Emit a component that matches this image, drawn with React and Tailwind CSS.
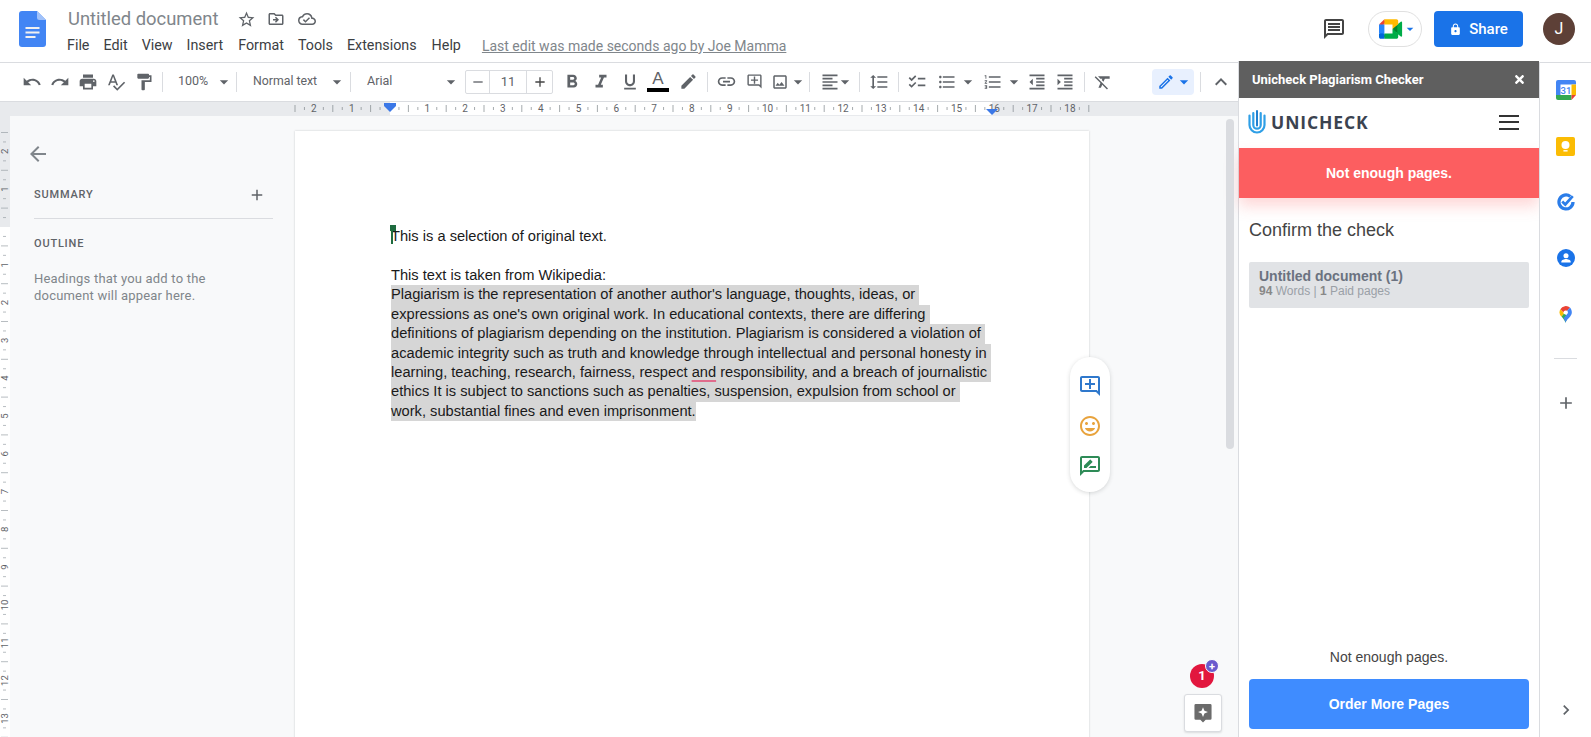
import {
  MdUndo, MdRedo, MdPrint, MdSpellcheck, MdFormatPaint, MdArrowDropDown, MdRemove, MdAdd,
  MdFormatBold, MdFormatItalic, MdFormatUnderlined, MdLink, MdOutlineAddComment, MdOutlineImage,
  MdFormatAlignLeft, MdFormatLineSpacing, MdChecklist, MdFormatListBulleted, MdFormatListNumbered,
  MdFormatIndentDecrease, MdFormatIndentIncrease, MdFormatClear, MdEdit, MdOutlineEdit, MdExpandLess, MdStarBorder,
  MdOutlineDriveFileMove, MdOutlineCloudDone, MdOutlineMessage, MdLock, MdArrowBack,
  MdOutlineInsertEmoticon, MdOutlineRateReview, MdChevronRight,
} from "react-icons/md";
import { FaTimes } from "react-icons/fa";

const menus = [
  ["File", "ml-0"],
  ["Edit", "ml-[14px]"],
  ["View", "ml-[14px]"],
  ["Insert", "ml-[14px]"],
  ["Format", "ml-[15px]"],
  ["Tools", "ml-[14px]"],
  ["Extensions", "ml-[14px]"],
  ["Help", "ml-[15px]"],
];

const selected = [
  "Plagiarism is the representation of another author's language, thoughts, ideas, or ",
  "expressions as one's own original work. In educational contexts, there are differing ",
  "definitions of plagiarism depending on the institution. Plagiarism is considered a violation of ",
  "academic integrity such as truth and knowledge through intellectual and personal honesty in ",
];

const hOrigin = 389.5;
const hNums = [-2, -1, 1, 2, 3, 4, 5, 6, 7, 8, 9, 10, 11, 12, 13, 14, 15, 16, 17, 18];
const vOrigin = 226;
const vNums = [-2, -1, 1, 2, 3, 4, 5, 6, 7, 8, 9, 10, 11, 12, 13];
const cm = 37.8;

function range(a, b) {
  const out = [];
  for (let i = a; i <= b; i += 0.25) out.push(i);
  return out;
}

function HorizontalRuler() {
  return (
    <svg width="1238" height="14" className="block shrink-0 bg-[#e8eaed]">
      <rect x="390" y="0" width="602" height="13" fill="#fff" />
      {range(-2.5, 18.5).map((n) => {
        if (Number.isInteger(n)) return null;
        const x = hOrigin + n * cm;
        const long = Number.isInteger(n * 2);
        return <line key={n} x1={x} x2={x} y1={long ? 3 : 5} y2={long ? 10 : 8} stroke="#80868b" strokeWidth="0.7" />;
      })}
      {hNums.map((n) => (
        <text key={n} x={hOrigin + n * cm} y="10" textAnchor="middle" fontSize="10" fontFamily="Roboto, sans-serif" fill="#5f6368">
          {Math.abs(n)}
        </text>
      ))}
      <path d="M384 1h12v3l-6 6-6-6z" fill="#3b78e7" />
      <path d="M986 7h12l-6 6z" fill="#3b78e7" />
    </svg>
  );
}

function VerticalRuler() {
  return (
    <svg width="10" height="622" className="block shrink-0 bg-white">
      <rect x="0" y="0" width="10" height="111" fill="#e8eaed" />
      {range(-2.5, 13.5).map((n) => {
        if (Number.isInteger(n)) return null;
        const y = vOrigin - 115 + n * cm;
        const long = Number.isInteger(n * 2);
        return <line key={n} x1={long ? 1 : 3} x2={long ? 8 : 6} y1={y} y2={y} stroke="#9aa0a6" strokeWidth="0.7" />;
      })}
      {vNums.map((n) => {
        const y = vOrigin - 115 + n * cm;
        return (
          <text key={n} x="4.5" y={y} textAnchor="middle" dominantBaseline="central" fontSize="9.5" fontFamily="Roboto, sans-serif" fill="#5f6368" transform={`rotate(-90 4.5 ${y})`}>
            {Math.abs(n)}
          </text>
        );
      })}
    </svg>
  );
}

function DocsLogo() {
  return (
    <svg width="27" height="36" viewBox="0 0 27 36" className="shrink-0">
      <path d="M3 0h15l9 9v24a3 3 0 0 1-3 3H3a3 3 0 0 1-3-3V3a3 3 0 0 1 3-3z" fill="#4285f4" />
      <path d="M18 0l9 9h-6.5A2.5 2.5 0 0 1 18 6.500z" fill="#a1c2fa" />
      <path d="M6.500 16h14v2h-14zM6.500 20.500h14v2h-14zM6.500 25h10v2h-10z" fill="#f1f1f1" />
    </svg>
  );
}

function MeetLogo() {
  return (
    <svg width="24" height="20" viewBox="0 0 24 20">
      <path d="M13.500 10l2.400 2.700 3.200 2.100.6-4.800-.6-4.700-3.300 1.800z" fill="#00832d" />
      <path d="M0 14.400V18c0 1 .8 1.800 1.800 1.800h3.600l.8-2.700-.8-2.700-2.500-.8z" fill="#0066da" />
      <path d="M5.400.200 0 5.500l2.800.8 2.600-.8.800-2.500z" fill="#e94235" />
      <path d="M5.400 5.500H0v8.900h5.400z" fill="#2684fc" />
      <path d="M21.800 2.700l-3.500 2.800v9.300l3.500 2.800c.5.400 1.300 0 1.300-.7V3.400c0-.7-.8-1.100-1.300-.7z" fill="#00ac47" />
      <path d="M13.500 10v4.400H5.400v5.400h12c1 0 1.800-.8 1.800-1.800v-3.600z" fill="#00ac47" />
      <path d="M17.400.200h-12v5.300h8.100V10l5.700-4.700V2c0-1-.8-1.800-1.800-1.800z" fill="#ffba00" />
    </svg>
  );
}

function UnicheckMark() {
  return (
    <svg width="18" height="24" viewBox="0 0 18 24" fill="none" strokeLinecap="round">
      <path d="M1.500 5.500v9.500a7.500 7.500 0 0 0 15 0V5.500" stroke="#2f9fe6" strokeWidth="2.200" />
      <path d="M5.300 3v12a3.700 3.700 0 0 0 7.400 0V3" stroke="#2f9fe6" strokeWidth="2.200" />
      <path d="M9 1v14.500" stroke="#1f7fd0" strokeWidth="2" />
    </svg>
  );
}

function CalendarIcon() {
  return (
    <svg width="20" height="20" viewBox="0 0 20 20">
      <rect x="4" y="4" width="12" height="12" fill="#fff" />
      <path d="M15 0H2a2 2 0 0 0-2 2v13h4.500V4.500H20V2a2 2 0 0 0-2-2z" fill="#4285f4" />
      <path d="M15.500 4.500H20v10.500h-4.500z" fill="#fbbc04" />
      <path d="M0 15v3a2 2 0 0 0 2 2h13.500v-5z" fill="#34a853" />
      <path d="M15.500 15H20l-4.500 5z" fill="#ea4335" />
      <text x="10" y="13.500" textAnchor="middle" fontSize="9.500" fontWeight="500" fontFamily="Roboto, sans-serif" fill="#4285f4">31</text>
    </svg>
  );
}

function KeepIcon() {
  return (
    <svg width="19" height="19" viewBox="0 0 20 20">
      <rect width="20" height="20" rx="2" fill="#fbbc04" />
      <circle cx="10" cy="8.500" r="4.200" fill="#fff" />
      <rect x="7.800" y="13.800" width="4.400" height="1.500" fill="#fff" />
    </svg>
  );
}

function TasksIcon() {
  return (
    <svg width="18" height="18" viewBox="0 0 20 20" fill="none">
      <path d="M14.800 3.800A7.800 7.800 0 1 0 17.800 10" stroke="#2b7de9" strokeWidth="3.600" />
      <path d="M5.800 9.500l3.400 3.300 8.300-9.300" stroke="#2b7de9" strokeWidth="3" />
    </svg>
  );
}

function ContactsIcon() {
  return (
    <svg width="18" height="18" viewBox="0 0 20 20">
      <circle cx="10" cy="10" r="10" fill="#1a73e8" />
      <circle cx="10" cy="7.500" r="2.800" fill="#fff" />
      <path d="M4.800 14.200c0-2 3.400-3 5.200-3s5.200 1 5.200 3v.8H4.800z" fill="#fff" />
    </svg>
  );
}

function MapsIcon() {
  return (
    <svg width="13" height="17" viewBox="0 0 16 20">
      <path d="M3 12.500c1.800 2.300 3.800 4.300 5 7.500l3-7-4.500-5z" fill="#34a853" />
      <path d="M1.700 3.500A7.500 7.500 0 0 0 3 12.500L6.500 8z" fill="#fbbc04" />
      <path d="M1.700 3.500L6.500 8a2.500 2.500 0 0 1 3.500-2.500l3.500-4A7.800 7.800 0 0 0 1.700 3.500z" fill="#ea4335" />
      <path d="M13.500 1.500L10 5.500a2.500 2.500 0 0 1 .5 3.200L5.500 14.500c1.300 1.600 2 3 2.500 5.500 1-4 7.800-7.500 7.800-12.500 0-2.300-.9-4.500-2.300-6z" fill="#4285f4" />
      <circle cx="8" cy="7.500" r="2.500" fill="#fff" />
    </svg>
  );
}

function ToolIcon({ icon: Icon, size = 20 }) {
  return (
    <div className="w-[28px] h-[28px] flex items-center justify-center shrink-0 text-[#5f6368]">
      <Icon size={size} />
    </div>
  );
}

function Caret({ className = "" }) {
  return <MdArrowDropDown size={20} className={`shrink-0 text-[#5f6368] ${className}`} />;
}

function Sep({ className = "" }) {
  return <div className={`w-px h-[20px] bg-[#dadce0] shrink-0 ${className}`} />;
}

function Toolbar() {
  return (
    <div className="h-[40px] shrink-0 border-y border-[#dadce0] bg-white flex items-center pl-[18px] pb-[1px] text-[13px] text-[#5f6368] font-['Roboto',sans-serif]">
      <ToolIcon icon={MdUndo} />
      <ToolIcon icon={MdRedo} />
      <ToolIcon icon={MdPrint} />
      <ToolIcon icon={MdSpellcheck} />
      <ToolIcon icon={MdFormatPaint} />
      <Sep className="ml-[4px]" />
      <div className="w-[73px] flex items-center pl-[15px] text-[12.500px]">
        <span className="w-[36px]">100%</span>
        <Caret />
      </div>
      <Sep />
      <div className="w-[113px] flex items-center pl-[16px] text-[12.300px]">
        <span className="w-[74px]">Normal text</span>
        <Caret />
      </div>
      <Sep />
      <div className="w-[114px] flex items-center pl-[16px] text-[12.500px]">
        <span className="w-[74px]">Arial</span>
        <Caret />
      </div>
      <div className="w-[88px] h-[24px] border border-[#dadce0] rounded-[2px] flex items-center">
        <div className="w-[24px] h-full flex items-center justify-center border-r border-[#dadce0]">
          <MdRemove size={16} />
        </div>
        <div className="w-[37px] h-full flex items-center justify-center border-r border-[#dadce0] text-[13px]">11</div>
        <div className="flex-1 h-full flex items-center justify-center">
          <MdAdd size={16} className="text-[#444]" />
        </div>
      </div>
      <div className="w-[28px] h-[28px] flex items-center justify-center ml-[5px]">
        <MdFormatBold size={22} />
      </div>
      <div className="ml-[1px]">
        <ToolIcon icon={MdFormatItalic} size={22} />
      </div>
      <div className="ml-[1px]">
        <ToolIcon icon={MdFormatUnderlined} />
      </div>
      <div className="w-[28px] h-[28px] flex flex-col items-center pt-[1px] shrink-0">
        <span className="text-[17px] leading-[19px] text-[#5f6368] font-['Liberation_Sans',sans-serif]">A</span>
        <div className="w-[22px] h-[4px] bg-black" />
      </div>
      <div className="ml-[2px]">
        <ToolIcon icon={MdEdit} size={19} />
      </div>
      <Sep className="ml-[5px]" />
      <div className="ml-[4px]">
        <ToolIcon icon={MdLink} size={21} />
      </div>
      <ToolIcon icon={MdOutlineAddComment} size={17} />
      <div className="flex items-center w-[38px] pl-[3px] shrink-0">
        <MdOutlineImage size={18} className="shrink-0" />
        <Caret className="-ml-[1px]" />
      </div>
      <Sep className="ml-[3px]" />
      <div className="flex items-center w-[46px] pl-[10px] shrink-0">
        <MdFormatAlignLeft size={20} className="shrink-0" />
        <Caret className="-ml-[5px]" />
      </div>
      <Sep className="ml-[3px]" />
      <div className="ml-[5px]">
        <ToolIcon icon={MdFormatLineSpacing} />
      </div>
      <Sep className="ml-[5px]" />
      <div className="ml-[4px]">
        <ToolIcon icon={MdChecklist} />
      </div>
      <div className="ml-[2px]">
        <ToolIcon icon={MdFormatListBulleted} />
      </div>
      <Caret className="-ml-[3px]" />
      <div className="ml-[1px]">
        <ToolIcon icon={MdFormatListNumbered} />
      </div>
      <Caret className="-ml-[3px]" />
      <div className="-ml-[1px]">
        <ToolIcon icon={MdFormatIndentDecrease} />
      </div>
      <ToolIcon icon={MdFormatIndentIncrease} />
      <Sep className="ml-[5px]" />
      <div className="ml-[4px]">
        <ToolIcon icon={MdFormatClear} />
      </div>
      <div className="ml-[35px] w-[42px] h-[26px] rounded-[4px] bg-[#e8f0fe] flex items-center pl-[5px] shrink-0">
        <MdOutlineEdit size={18} className="text-[#1a73e8] shrink-0" />
        <MdArrowDropDown size={20} className="shrink-0 text-[#1a73e8] -ml-[1px]" />
      </div>
      <Sep className="ml-[6px]" />
      <div className="ml-[6px]">
        <ToolIcon icon={MdExpandLess} size={24} />
      </div>
    </div>
  );
}

function Header() {
  return (
    <div className="h-[62px] shrink-0 flex bg-white pl-[19px] pr-[16px] font-['Roboto',sans-serif]">
      <div className="pt-[11px]">
        <DocsLogo />
      </div>
      <div className="ml-[21px] pt-[7px]">
        <div className="flex items-center h-[24px]">
          <span className="text-[18.400px] leading-[24px] text-[#80868b] ml-[1px]">Untitled document</span>
          <div className="flex items-center text-[#5f6368] ml-[19px] gap-[11px]">
            <MdStarBorder size={19} />
            <MdOutlineDriveFileMove size={18} />
            <MdOutlineCloudDone size={18} className="ml-[2px]" />
          </div>
        </div>
        <div className="flex items-center h-[20px] mt-[5px] text-[14.300px] text-[#3c4043]">
          {menus.map(([name, cls]) => (
            <span key={name} className={cls}>{name}</span>
          ))}
          <span className="ml-[21px] text-[14px] text-[#80868b] underline">Last edit was made seconds ago by Joe Mamma</span>
        </div>
      </div>
      <div className="ml-auto flex items-start pt-[11px]">
        <MdOutlineMessage size={24} className="text-[#444] mt-[6px]" />
        <div className="ml-[22px] w-[54px] h-[36px] rounded-full border border-[#e0e0e0] flex items-center pl-[10px]">
          <MeetLogo />
          <MdArrowDropDown size={16} className="text-[#1a73e8] -ml-[1px]" />
        </div>
        <div className="ml-[12px] w-[89px] h-[36px] rounded-[4px] bg-[#1a73e8] text-white flex items-center justify-center gap-[7px] text-[15px] font-medium">
          <MdLock size={13} />
          Share
        </div>
        <div className="ml-[20px] mt-[2px] w-[32px] h-[32px] rounded-full bg-[#5d4037] text-white flex items-center justify-center text-[16px]">J</div>
      </div>
    </div>
  );
}

function OutlineSidebar() {
  return (
    <div className="w-[285px] shrink-0 pl-[24px] pr-[22px] font-['Roboto',sans-serif]">
      <div className="pt-[26px] h-[70px]">
        <MdArrowBack size={24} className="text-[#80868b] -ml-[8px]" />
      </div>
      <div className="flex items-center justify-between h-[18px]">
        <span className="text-[11px] font-medium tracking-[0.8px] text-[#5f6368]">SUMMARY</span>
        <MdAdd size={18} className="text-[#5f6368] mr-[7px]" />
      </div>
      <div className="h-px bg-[#dadce0] mt-[14px]" />
      <div className="text-[11px] leading-[18px] font-medium tracking-[0.8px] text-[#5f6368] mt-[16px]">OUTLINE</div>
      <div className="text-[13px] leading-[17px] tracking-[0.2px] text-[#80868b] mt-[17px]">
        Headings that you add to the
        <br />
        document will appear here.
      </div>
    </div>
  );
}

function Page() {
  return (
    <div className="w-[794px] h-[640px] mt-[15px] shrink-0 bg-white shadow-[0_0_2px_rgba(60,64,67,0.25)] pt-[96px] pl-[96px] text-[14.670px] leading-[19.450px] text-[#1a1a1a] font-['Liberation_Sans',sans-serif]">
      <div className="relative">
        This is a selection of original text.
        <div className="absolute left-0 -top-[2px] w-[2px] h-[19px] bg-[#1e6b3f]" />
        <div className="absolute -left-[1px] -top-[2px] w-[6px] h-[6px] bg-[#1e6b3f]" />
      </div>
      <div className="h-[19.300px]" />
      <div>This text is taken from Wikipedia:</div>
      {selected.map((line) => (
        <div key={line} className="w-fit bg-[#d6d6d6] whitespace-pre">{line}</div>
      ))}
      <div className="w-fit bg-[#d6d6d6] whitespace-pre">
        {"learning, teaching, research, fairness, respect "}
        <span className="underline decoration-[#e06c8c] decoration-2 underline-offset-[3px]">and</span>
        {" responsibility, and a breach of journalistic "}
      </div>
      <div className="w-fit bg-[#d6d6d6] whitespace-pre">ethics It is subject to sanctions such as penalties, suspension, expulsion from school or </div>
      <div className="w-fit bg-[#d6d6d6] whitespace-pre">work, substantial fines and even imprisonment.</div>
    </div>
  );
}

function FloatingActions() {
  return (
    <div className="absolute left-[1070px] top-[357px] w-[40px] h-[135px] rounded-full bg-white shadow-[0_1px_4px_rgba(60,64,67,0.2)] flex flex-col items-center pt-[17px] gap-[16px]">
      <MdOutlineAddComment size={24} className="text-[#2f78cc]" />
      <MdOutlineInsertEmoticon size={24} className="text-[#e8a33d]" />
      <MdOutlineRateReview size={24} className="text-[#2e8b57]" />
    </div>
  );
}

function ExploreButton() {
  return (
    <div className="absolute left-[1184px] top-[694px] w-[38px] h-[38px] rounded-[3px] bg-white border border-[#dadce0] shadow-[0_1px_2px_rgba(60,64,67,0.15)] flex items-center justify-center">
      <svg width="18" height="20" viewBox="0 0 20 22">
        <path d="M2 1h16a1.500 1.500 0 0 1 1.500 1.500V17a1.500 1.500 0 0 1-1.500 1.500h-5L10 21.500 7 18.500H2A1.500 1.500 0 0 1 .5 17V2.500A1.500 1.500 0 0 1 2 1z" fill="#6b6b6b" />
        <path d="M10 4.500l1.600 3.900 3.900 1.600-3.900 1.600L10 15.500l-1.600-3.900L4.500 10l3.900-1.600z" fill="#fff" />
      </svg>
    </div>
  );
}

function UnicheckPanel() {
  return (
    <div className="w-[301px] shrink-0 -mt-[1px] border-l border-[#dadce0] bg-white flex flex-col font-['Liberation_Sans',sans-serif]">
      <div className="h-[37px] shrink-0 bg-[#5f5f5f] text-white flex items-center justify-between pl-[13px] pr-[13px] text-[13px] font-bold font-['Roboto',sans-serif]">
        Unicheck Plagiarism Checker
        <FaTimes size={13} />
      </div>
      <div className="h-[50px] shrink-0 flex items-center justify-between pl-[9px] pr-[20px] pb-[2px]">
        <div className="flex items-center gap-[5px]">
          <UnicheckMark />
          <span className="text-[17.500px] font-bold tracking-[0.900px] text-[#3b4350] font-['Open_Sans',sans-serif]">UNICHECK</span>
        </div>
        <div className="w-[20px] flex flex-col gap-[4.500px]">
          <div className="h-[2px] bg-[#333]" />
          <div className="h-[2px] bg-[#333]" />
          <div className="h-[2px] bg-[#333]" />
        </div>
      </div>
      <div className="h-[50px] shrink-0 bg-[#fc5e60] text-white font-bold text-[14px] flex items-center justify-center shadow-[0_8px_14px_rgba(252,94,96,0.25)]">
        Not enough pages.
      </div>
      <div className="px-[10px] flex-1 flex flex-col">
        <div className="text-[18px] leading-[24px] text-[#444] mt-[20px]">Confirm the check</div>
        <div className="h-[46px] mt-[20px] bg-[#e1e3e6] rounded-[2px] pl-[10px] pt-[6px]">
          <div className="text-[14px] leading-[16px] font-bold text-[#6b7280]">Untitled document (1)</div>
          <div className="text-[12px] leading-[14px] text-[#9aa0a6]">
            <b className="text-[#888]">94</b> Words | <b className="text-[#888]">1</b> Paid pages
          </div>
        </div>
        <div className="mt-auto text-center text-[14px] leading-[18px] text-[#444]">Not enough pages.</div>
        <div className="h-[50px] mt-[13px] mb-[8px] rounded-[4px] bg-[#3f8cff] text-white font-bold text-[14px] flex items-center justify-center">
          Order More Pages
        </div>
      </div>
    </div>
  );
}

function SideRail() {
  return (
    <div className="flex-1 border-l border-t border-[#dadce0] bg-white flex flex-col items-center pt-[17px] pb-[17px]">
      <div className="flex flex-col items-center gap-[36px]">
        <div className="h-[20px] flex items-center"><CalendarIcon /></div>
        <div className="h-[20px] flex items-center"><KeepIcon /></div>
        <div className="h-[20px] flex items-center"><TasksIcon /></div>
        <div className="h-[20px] flex items-center"><ContactsIcon /></div>
        <div className="h-[20px] flex items-center"><MapsIcon /></div>
      </div>
      <div className="w-[23px] h-px bg-[#dadce0] mt-[34px]" />
      <MdAdd size={20} className="text-[#5f6368] mt-[34px]" />
      <MdChevronRight size={20} className="text-[#5f6368] mt-auto" />
    </div>
  );
}

export default function App() {
  return (
    <div className="relative w-[1591px] h-[737px] overflow-hidden flex flex-col bg-white">
      <Header />
      <div className="flex-1 flex min-h-0">
        <div className="w-[1238px] shrink-0 flex flex-col min-h-0">
          <Toolbar />
          <HorizontalRuler />
          <div className="flex-1 flex bg-[#f8f9fa] overflow-hidden min-h-0">
            <VerticalRuler />
            <OutlineSidebar />
            <Page />
          </div>
        </div>
        <UnicheckPanel />
        <SideRail />
      </div>
      <FloatingActions />
      <div className="absolute left-[1226px] top-[119px] w-[8px] h-[330px] rounded-full bg-[#dadce0]" />
      <div className="absolute left-[1190px] top-[664px] w-[24px] h-[24px] rounded-full bg-[#e2173e] text-white text-[13px] font-bold flex items-center justify-center font-['Roboto',sans-serif]">1</div>
      <div className="absolute left-[1205px] top-[659px] w-[14px] h-[14px] rounded-full bg-[#6a5acd] border border-white text-white text-[11px] leading-none font-bold flex items-center justify-center font-['Roboto',sans-serif]">+</div>
      <ExploreButton />
    </div>
  );
}
